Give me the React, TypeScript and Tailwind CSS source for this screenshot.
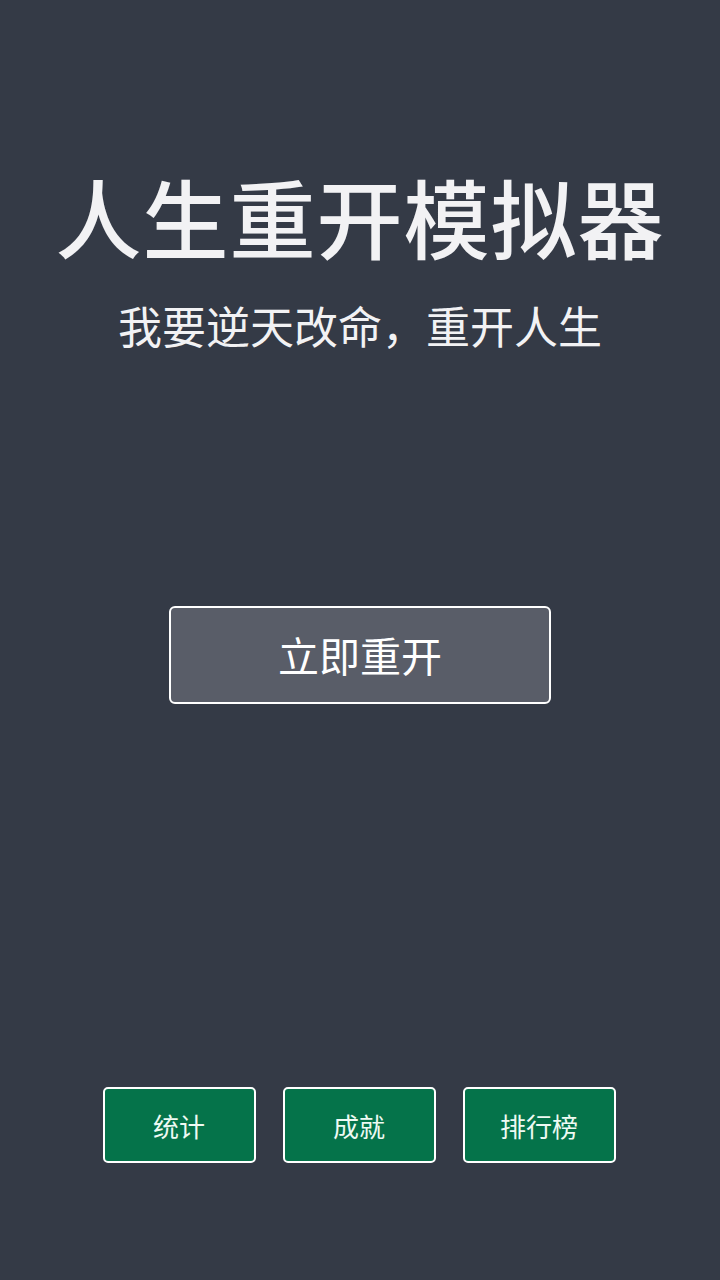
export default function App() {
  const font = { fontFamily: '"Noto Sans CJK SC", "Noto Sans", sans-serif' };
  return (
    <div
      className="w-[720px] h-[1280px] bg-[#343a46] flex flex-col items-center text-[#f2f2f4]"
      style={font}
    >
      {/* Title */}
      <h1 className="mt-[173px] text-[86px] leading-[86px] font-medium tracking-[1px]">
        人生重开模拟器
      </h1>
      <p className="mt-[44px] text-[44px] leading-[44px]">我要逆天改命，重开人生</p>

      {/* Main button */}
      <button className="mt-[259px] w-[382px] h-[98px] rounded-[6px] border-2 border-white bg-[#595d68] text-[41px] text-white flex items-center justify-center">
        立即重开
      </button>

      <div className="flex-1" />

      {/* Bottom buttons */}
      <div className="mb-[117px] flex gap-[27px] -ml-[2px]">
        {["统计", "成就", "排行榜"].map((label) => (
          <button
            key={label}
            className="w-[153px] h-[76px] rounded-[5px] border-2 border-white bg-[#05734a] text-[26px] text-[#eefaf3] flex items-center justify-center"
          >
            {label}
          </button>
        ))}
      </div>
    </div>
  );
}
